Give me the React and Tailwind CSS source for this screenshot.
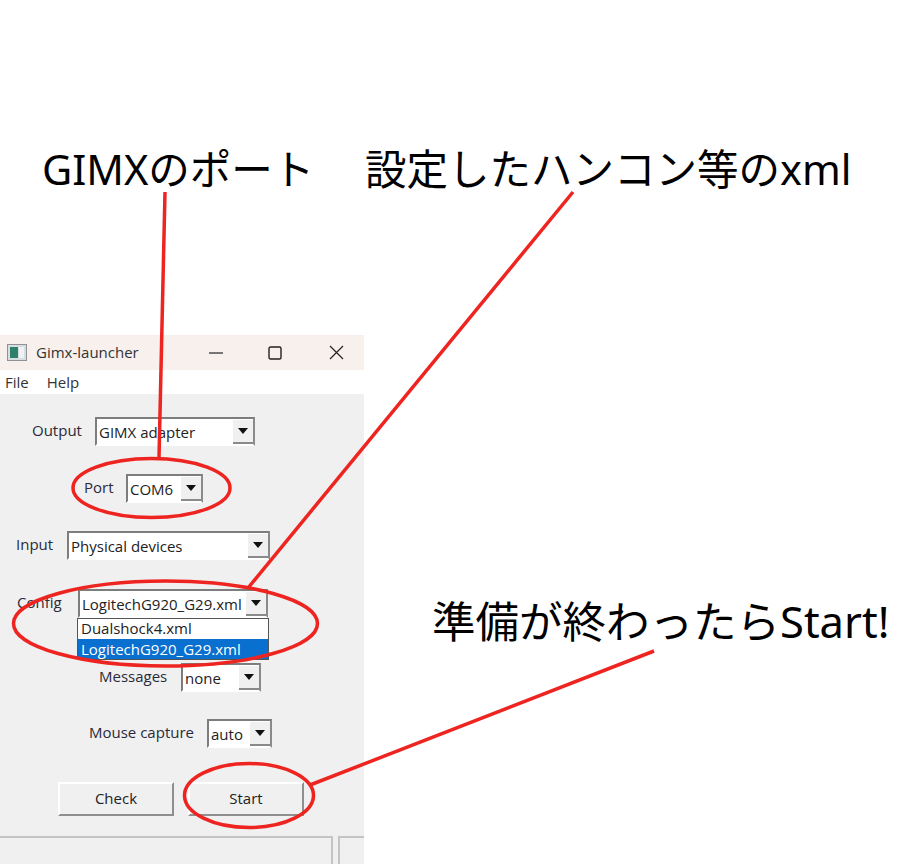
const UI = { fontFamily: '"Open Sans", "Noto Sans", sans-serif' }

function Combo({ text, className }) {
  return (
    <div className={`flex items-center h-[29px] shrink-0 border-2 border-t-[#7d7d7d] border-l-[#7d7d7d] border-r-[#8a8a8a] border-b-white bg-white ${className}`}>
      <span className="flex-1 pl-[2px] text-[15px] leading-[20px] text-[#222] whitespace-nowrap">{text}</span>
      <span className="w-[20px] h-[24px] flex items-center justify-center bg-[#f0f0f0] border-b-2 border-[#8a8a8a] shrink-0">
        <svg width="10" height="6" viewBox="0 0 10 6"><path d="M0 0h10L5 6z" fill="#111" /></svg>
      </span>
    </div>
  )
}

function Row({ label, text, rowClass, labelClass, comboClass }) {
  return (
    <div className={`flex items-center ${rowClass}`}>
      <span className={`text-[15px] leading-[20px] text-[#2a2a3a] -mt-[4px] ${labelClass}`}>{label}</span>
      <Combo text={text} className={comboClass} />
    </div>
  )
}

function WinButton({ label, className }) {
  return (
    <div className={`w-[116px] h-[34px] pb-[2px] flex items-center justify-center bg-[#f0f0f0] border-t-2 border-l-2 border-t-white border-l-white border-r-2 border-b-2 border-r-[#8f8f8f] border-b-[#8f8f8f] text-[15px] text-[#222] ${className}`}>
      {label}
    </div>
  )
}

function GimxWindow() {
  return (
    <div className="w-[364px] h-[529px] flex flex-col bg-[#f0f0f0]" style={UI}>
      {/* title bar */}
      <div className="h-[35px] bg-[#f7f0ed] flex items-center shrink-0">
        <svg className="ml-[7px]" width="20" height="17" viewBox="0 0 20 17">
          <rect x="0.5" y="0.5" width="19" height="16" fill="#d8dde0" stroke="#8c9296" />
          <rect x="3" y="3" width="8" height="11" fill="#2f7f6e" />
          <rect x="12" y="3" width="5" height="11" fill="#eef2f4" />
        </svg>
        <span className="ml-[9px] text-[15px] text-[#333]">Gimx-launcher</span>
        <svg className="ml-[70px]" width="14" height="2" viewBox="0 0 14 2"><path d="M0 1h14" stroke="#222" strokeWidth="1.2" /></svg>
        <svg className="ml-[45px]" width="14" height="14" viewBox="0 0 14 14"><rect x="1" y="1" width="12" height="12" rx="1.5" fill="none" stroke="#222" strokeWidth="1.4" /></svg>
        <svg className="ml-[47px]" width="15" height="15" viewBox="0 0 15 15"><path d="M1 1l13 13M14 1L1 14" stroke="#222" strokeWidth="1.2" /></svg>
      </div>
      {/* menu */}
      <div className="h-[24px] bg-white flex items-center gap-[18px] pl-[5px] text-[15px] text-[#333] shrink-0">
        <span>File</span>
        <span>Help</span>
      </div>
      {/* form */}
      <div className="flex-1 flex flex-col">
        <Row label="Output" text="GIMX adapter" rowClass="mt-[23px] pl-[32px]" labelClass="w-[63px]" comboClass="w-[160px]" />
        <Row label="Port" text="COM6" rowClass="mt-[28px] pl-[84px]" labelClass="w-[42px]" comboClass="w-[77px]" />
        <Row label="Input" text="Physical devices" rowClass="mt-[28px] pl-[16px]" labelClass="w-[51px]" comboClass="w-[203px]" />
        <div className="relative">
          <Row label="Config" text="LogitechG920_G29.xml" rowClass="mt-[29px] pl-[17px]" labelClass="w-[61px]" comboClass="w-[190px]" />
          {/* open dropdown */}
          <div className="absolute left-[77px] top-[58px] w-[192px] h-[42px] bg-white border border-[#555] text-[15px] leading-[20px] text-[#222] z-10">
            <div className="pl-[3px] -mt-[1px] h-[21px]">Dualshock4.xml</div>
            <div className="pl-[3px] bg-[#0a70d0] text-white">LogitechG920_G29.xml</div>
          </div>
        </div>
        <Row label="Messages" text="none" rowClass="mt-[45px] pl-[99px]" labelClass="w-[82px]" comboClass="w-[80px]" />
        <Row label="Mouse capture" text="auto" rowClass="mt-[27px] pl-[89px]" labelClass="w-[118px]" comboClass="w-[65px]" />
        <div className="flex mt-[34px] pl-[58px] gap-[14px]">
          <WinButton label="Check" />
          <WinButton label="Start" />
        </div>
      </div>
      {/* status bar */}
      <div className="h-[28px] flex gap-[5px] shrink-0">
        <div className="w-[333px] border-t-2 border-r-2 border-[#c4c4c4]" />
        <div className="flex-1 border-t-2 border-l-2 border-[#c4c4c4]" />
      </div>
    </div>
  )
}

const CAPTION = 'absolute leading-none text-black whitespace-nowrap'
const CAPTION_FONT = { fontFamily: '"Noto Sans", "Noto Sans CJK JP", sans-serif' }

export default function App() {
  return (
    <div className="relative w-[903px] h-[864px] bg-white overflow-hidden">
      <div className="pt-[335px]">
        <GimxWindow />
      </div>

      {/* annotations */}
      <span className={`${CAPTION} text-[41.500px] left-[42px] top-[149px]`} style={CAPTION_FONT}>GIMXのポート</span>
      <span className={`${CAPTION} text-[41.500px] left-[365px] top-[149px]`} style={CAPTION_FONT}>設定したハンコン等のxml</span>
      <span className={`${CAPTION} text-[43.500px] left-[432px] top-[600px]`} style={CAPTION_FONT}>準備が終わったらStart!</span>

      <svg className="absolute left-0 top-0 z-20 pointer-events-none" width="903" height="864" viewBox="0 0 903 864">
        <g fill="none" stroke="#ee2420" strokeWidth="3.5">
          <path d="M165 192L159 458" />
          <path d="M573 192L248 588" />
          <path d="M310 785L654 651" />
          <ellipse cx="151.500" cy="488" rx="78.500" ry="29.500" />
          <ellipse cx="165.500" cy="623.500" rx="152" ry="42.500" />
          <ellipse cx="249" cy="795.500" rx="64.500" ry="32" />
        </g>
      </svg>
    </div>
  )
}
